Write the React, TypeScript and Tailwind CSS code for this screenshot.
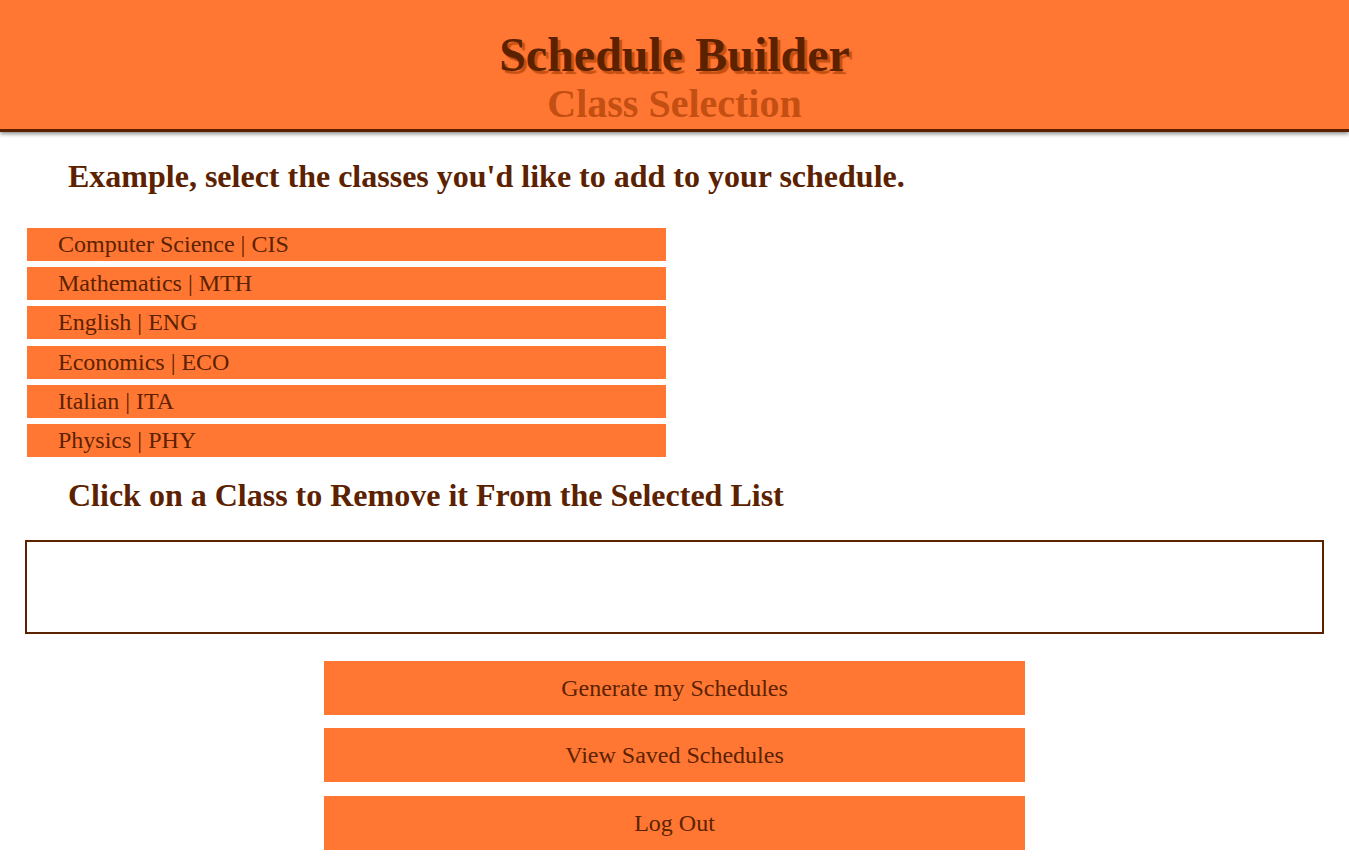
const subjects = [
  'Computer Science | CIS',
  'Mathematics | MTH',
  'English | ENG',
  'Economics | ECO',
  'Italian | ITA',
  'Physics | PHY',
]

const actions = ['Generate my Schedules', 'View Saved Schedules', 'Log Out']

export default function App() {
  return (
    <div className="min-h-screen bg-white font-['Liberation_Serif',serif] text-[#5c2200]">
      <header className="h-[132px] bg-[#ff7733] border-b-[3px] border-[#5c2200] shadow-[0_2px_4px_rgba(0,0,0,0.45)] flex flex-col items-center pt-[30px]">
        <h1 className="text-[48px] leading-[50px] font-bold text-[#5c2200] [text-shadow:3px_3px_1px_#c44f12]">
          Schedule Builder
        </h1>
        <h2 className="mt-[3px] text-[40px] leading-[42px] font-bold text-[#c44f12]">Class Selection</h2>
      </header>

      <h3 className="mt-[26px] ml-[68px] text-[32px] leading-[36px] font-bold">
        Example, select the classes you'd like to add to your schedule.
      </h3>

      <ul className="mt-[34px] ml-[27px] w-[639px] flex flex-col gap-[6.2px]">
        {subjects.map((s) => (
          <li key={s} className="h-[33px] bg-[#ff7733] pl-[31px] text-[24px] leading-[33px] cursor-pointer">
            {s}
          </li>
        ))}
      </ul>

      <h3 className="mt-[20px] ml-[68px] text-[32px] leading-[36px] font-bold">
        Click on a Class to Remove it From the Selected List
      </h3>

      <div className="mt-[27px] mx-[25px] h-[94px] border-2 border-[#5c2200]" />

      <div className="mt-[27px] flex flex-col items-center gap-[13.5px] pb-[14px]">
        {actions.map((a) => (
          <button key={a} className="w-[701px] h-[54px] bg-[#ff7733] text-[24px] text-[#5c2200]">
            {a}
          </button>
        ))}
      </div>
    </div>
  )
}
